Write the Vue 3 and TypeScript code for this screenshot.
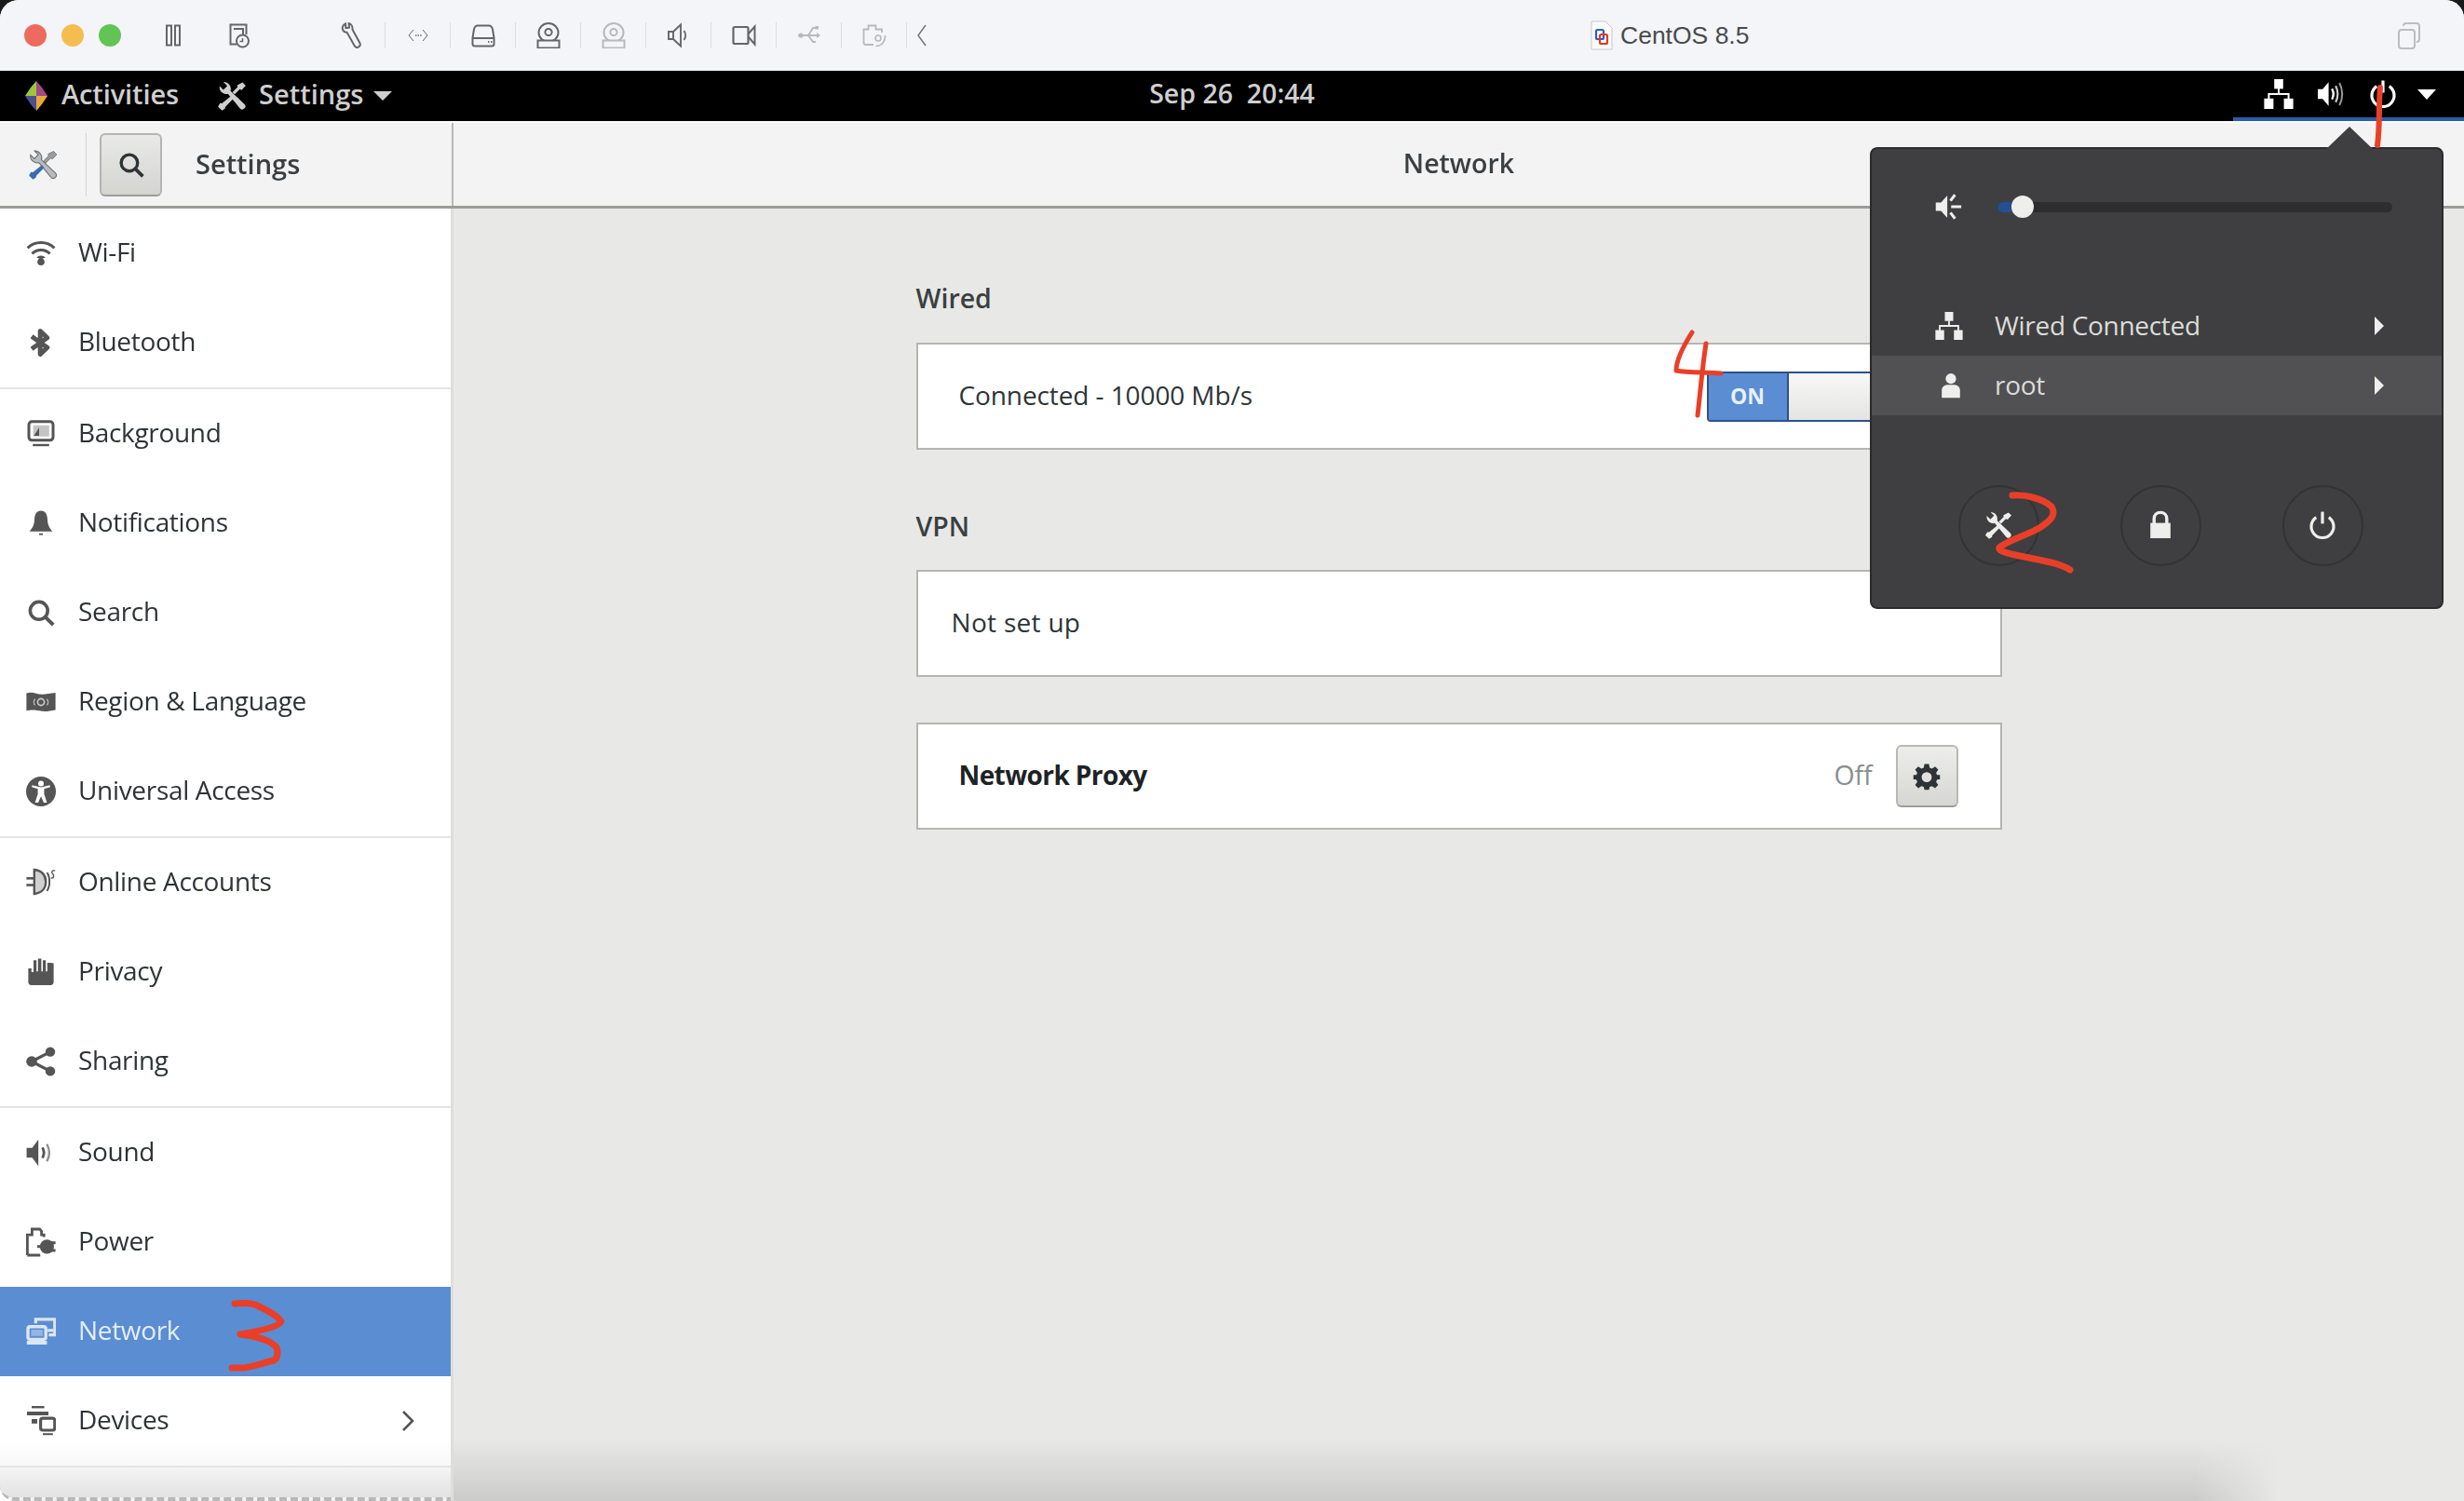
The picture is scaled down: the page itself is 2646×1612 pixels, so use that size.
<script setup lang="ts">
const icons: Record<string, string> = {
  wifi: '<g fill="none" stroke="currentColor" stroke-width="1.5"><path d="M.8 5.2A10.4 10.4 0 0 1 15.2 5.2"/><path d="M3.2 8.2A6.8 6.8 0 0 1 12.8 8.2"/></g><circle cx="8" cy="12.6" r="1.9"/><path d="M5.6 10.2A3.4 3.4 0 0 1 10.4 10.2L8 11.2Z"/>',
  bluetooth: '<path d="M3 4.6 11.4 10.6 7.6 14.2V1.8L11.4 5.4 3 11.4" fill="none" stroke="currentColor" stroke-width="2.5" stroke-linejoin="round"/>',
  background: '<rect x="1.5" y="1.4" width="13" height="10" rx="1.6" fill="none" stroke="currentColor" stroke-width="1.5"/><rect x="3.8" y="3.4" width="8.6" height="6" fill="currentColor" opacity=".35"/><path d="M4.2 9 7 4.6V9Z"/><rect x="3.6" y="13.4" width="8.8" height="1.2"/>',
  bell: '<path d="M8 1.2C5.6 1.2 4.6 3.2 4.5 6 4.4 9 3.4 10.6 1.8 12.4H14.2C12.6 10.6 11.6 9 11.5 6 11.4 3.2 10.4 1.2 8 1.2Z"/><rect x="7" y="13.4" width="2" height=".9"/>',
  search: '<circle cx="6.9" cy="6.9" r="4.7" fill="none" stroke="currentColor" stroke-width="1.8"/><path d="M10.2 10.2 14.6 14.6" stroke="currentColor" stroke-width="2"/>',
  region: '<path d="M.2 3.2C3.5 2.2 5.8 3.9 8.6 3.9 10.8 3.9 13 3.2 15.8 3V12.2C13 12.6 10.8 13.2 8.6 12.9 5.8 12.5 3.5 11.9.2 12.6Z"/><circle cx="8" cy="8" r="1.8" fill="none" stroke="#ccc" stroke-width=".8"/><path d="M4.8 6.4C4 7.4 4 8.8 4.8 9.6M11.2 6.4C12 7.4 12 8.8 11.2 9.6" fill="none" stroke="#bbb" stroke-width=".7"/>',
  access: '<circle cx="8" cy="8" r="8"/><circle cx="8" cy="3.8" r="1.5" fill="#fff"/><path d="M3 5.6 6.3 6.6V9.4L4.8 14H6.5L8 10.6 9.5 14H11.2L9.7 9.4V6.6L13 5.6 12.7 4.6 8 5.7 3.3 4.6Z" fill="#fff"/>',
  online: '<rect x=".2" y="5" width="4" height="1.3"/><rect x=".2" y="8.6" width="4" height="1.3"/><path d="M4.4 1C8.4 1.4 10.6 4 10.6 7.4 10.6 11 8.4 13.6 4.4 14Z" fill="currentColor" fill-opacity=".28" stroke="currentColor" stroke-width="1.2"/><path d="M11.2 2.6C13 5 13 10 11.2 12.4" fill="none" stroke="currentColor" stroke-width="1"/><path d="M15.6 1.6C14.2 1 13.3 2.2 14.2 3.2 15.2 4 15 5.8 13.4 5.4" fill="none" stroke="currentColor" stroke-width=".7"/>',
  privacy: '<path d="M1.2 6H2.9V8H4V1.6H5.6V7.6H6.4V.8H8.2V7.6H9V1.6H10.6V7.6H11.4V3H13.2L14.8 3.2V13.4C14.8 14.4 14.2 15 13.2 15H2.8C1.8 15 1.2 14.4 1.2 13.4Z"/>',
  share: '<path d="M3 8 13 2.8M3 8 13 13.2" stroke="currentColor" stroke-width="1.6"/><circle cx="3" cy="8" r="2.9"/><circle cx="13" cy="2.8" r="2.6"/><circle cx="13" cy="13.2" r="2.6"/>',
  sound: '<path d="M.3 5.4H3.3L6.6.9V15.1L3.3 10.6H.3Z"/><path d="M8.8 5.2C9.8 7 9.8 9 8.8 10.8" fill="none" stroke="currentColor" stroke-width="1.4"/><path d="M11.2 3.4C12.8 6.4 12.8 9.6 11.2 12.6" fill="none" stroke="currentColor" stroke-width="1.2" opacity=".65"/>',
  power: '<path d="M.7 15V4.1H3.2V1H7.3L8.3 2.1V4.1H9.6V5.2M7.6 15H.7" fill="none" stroke="currentColor" stroke-width="1.4"/><circle cx="11.2" cy="10.4" r="3.8"/><rect x="12.8" y="7.6" width="3" height="1.5"/><rect x="12.8" y="11.7" width="3" height="1.5"/><rect x="6" y="9.6" width="2.4" height="1.5"/>',
  network: '<rect x="1" y="5.4" width="9.6" height="6.8" rx="1.2" fill="none" stroke="currentColor" stroke-width="1.7"/><rect x="2.7" y="7" width="6.2" height="3.4" fill="currentColor" opacity=".45"/><rect x=".4" y="13" width="10.8" height="2"/><path d="M5.2 3.6V1.4H15.4V9.8H12.2" fill="none" stroke="currentColor" stroke-width="1.6"/><rect x="11.6" y="6.6" width="3.2" height="1.6"/>',
  devices: '<rect x="3" y="0" width="6.8" height="1.2"/><rect x="0.5" y="3" width="11.5" height="2"/><rect x="3" y="7" width="3" height="2.4"/><rect x="7.8" y="6.6" width="7.6" height="6.4" rx="1.2" fill="none" stroke="currentColor" stroke-width="1.6"/><rect x="9" y="14.6" width="5.4" height="1"/>',
  tools: '<path d="M3.8 1 5.7 2.9 3.7 4.9 1.8 3A3.4 3.4 0 0 0 6 6.9L12.1 14.3A1.5 1.5 0 0 0 14.4 12.2L7.3 5.5A3.5 3.5 0 0 0 3.8 1Z"/><path d="M13.4 1.2 15 2.8 12.9 5 12 4.6 9.4 7.2 8.3 6.1 10.9 3.5 10.7 2.6ZM7.5 8.1 8.7 9.4 4.6 13.6 4.6 14.4 3 15.4 1 13.4 2 11.7 3 11.8Z"/>',
  sitemap: '<rect x="5.6" y="0" width="4.8" height="5.2"/><rect x=".2" y="10.4" width="5" height="5.6"/><rect x="10.8" y="10.4" width="5" height="5.6"/><path d="M8 5V8H2.7V10.6M8 8H13.3V10.6" fill="none" stroke="currentColor" stroke-width="1"/>',
  speakerOn: '<path d="M1 5.4H3.6L6.8 1.6V14.4L3.6 10.6H1Z"/><path d="M8.6 5.2C9.6 7 9.6 9 8.6 10.8" fill="none" stroke="currentColor" stroke-width="1.2"/><path d="M10.6 3.6C12 6.4 12 9.6 10.6 12.4" fill="none" stroke="currentColor" stroke-width="1.1" opacity=".8"/><path d="M12.6 2C14.6 5.6 14.6 10.4 12.6 14" fill="none" stroke="currentColor" stroke-width="1" opacity=".6"/>',
  muted: '<path d="M.4 5.6H3.4L7 1.6V14.4L3.4 10.4H.4Z"/><path d="M9.2 8H15M8.8 4.6 11.4 1.2M8.8 11.4 11.4 14.8" stroke="currentColor" stroke-width="1.6"/>',
  powerSym: '<path d="M4.6 3.8A6 6 0 1 0 11.4 3.8" fill="none" stroke="currentColor" stroke-width="1.6"/><path d="M8 .8V7.2" stroke="currentColor" stroke-width="1.6"/>',
  user: '<circle cx="8" cy="3.8" r="3.2"/><path d="M2.4 15.5V11C2.4 9 4 7.8 5.8 7.6H10.2C12 7.8 13.6 9 13.6 11V15.5Z"/>',
  lock: '<path d="M4.6 7V4.6C4.6 2.6 6 1.2 8 1.2S11.4 2.6 11.4 4.6V7" fill="none" stroke="currentColor" stroke-width="1.7"/><rect x="2.6" y="6.8" width="10.8" height="8.2"/>',
  gear: '<path fill-rule="evenodd" d="M6.7.8H9.3L9.7 2.9 11 3.4 12.8 2.2 14.6 4 13.4 5.8 13.9 7.1 15.6 7V9.6L13.9 9.7 13.4 11 14.6 12.8 12.8 14.6 11 13.4 9.7 13.9 9.3 15.6H6.7L6.3 13.9 5 13.4 3.2 14.6 1.4 12.8 2.6 11 2.1 9.7.4 9.6V7L2.1 7.1 2.6 5.8 1.4 4 3.2 2.2 5 3.4 6.3 2.9ZM8 5.4A2.9 2.9 0 1 0 8 11.2 2.9 2.9 0 0 0 8 5.4Z"/>',
};

const toolIcons: Record<string, string> = {
  wrench: '<path d="M6 1.5C3 2.6 2 6 3.4 8.6 4.4 10.2 6 11 7.6 10.8L15.6 25C16.6 26.8 18.6 27.4 20.2 26.4 21.8 25.4 22.2 23.6 21.2 21.8L13.4 7.6C14 4.8 12.4 2 9.6 1L10 5.6 6.4 6.2Z" fill="none" stroke="currentColor" stroke-width="2"/>',
  code: '<path d="M9 8 4 14 9 20M19 8 24 14 19 20" fill="none" stroke="currentColor" stroke-width="1"/><path d="M11 14H12.4M13.6 14H15M16.2 14H17.6" stroke="currentColor" stroke-width="1.6"/>',
  hdd: '<path d="M8 3.5H20C22 3.5 23.4 5 24 7.5L25.5 16.5V23C25.5 24.4 24.4 25.5 23 25.5H5C3.6 25.5 2.5 24.4 2.5 23V16.5L4 7.5C4.6 5 6 3.5 8 3.5Z M2.6 17H25.4" fill="none" stroke="currentColor" stroke-width="2"/><path d="M19 21H20.4M22 21H23.4" stroke="currentColor" stroke-width="1.8"/>',
  cd: '<ellipse cx="14" cy="11" rx="10.5" ry="10" fill="none" stroke="currentColor" stroke-width="2"/><circle cx="14" cy="10.5" r="3.6" fill="none" stroke="currentColor" stroke-width="2"/><path d="M2.5 19.5H25.5V27.5H2.5Z" fill="#f3f5f9" stroke="currentColor" stroke-width="2"/>',
  speaker: '<path d="M3 10H8L16 2.5V25.5L8 18H3ZM8 10V18" fill="none" stroke="currentColor" stroke-width="1.9"/><path d="M19.5 9C21.5 12 21.5 16 19.5 19" fill="none" stroke="currentColor" stroke-width="1.8"/>',
  camera: '<rect x="2.5" y="5" width="16" height="18" rx="1.5" fill="none" stroke="currentColor" stroke-width="2.2"/><path d="M18.5 12.5 25.5 4.5V23.5L18.5 15.5" fill="none" stroke="currentColor" stroke-width="2"/>',
  usb: '<path d="M2 14H24M13 14 18 6H22M13 14 18 21H21" fill="none" stroke="currentColor" stroke-width="1.9"/><circle cx="5" cy="14" r="2.6"/><path d="M22 11 26 14 22 17Z"/><rect x="20.5" y="4" width="3.5" height="3.5"/>',
  folder: '<path d="M13 24H4.5C3.4 24 2.5 23.1 2.5 22V7.5H7.5V3.5H15.5V7.5H22V11" fill="none" stroke="currentColor" stroke-width="1.8"/><circle cx="18" cy="17" r="3" fill="none" stroke="currentColor" stroke-width="1.6"/><path d="M25.5 14C26 20 22 25.5 15.5 25.5" fill="none" stroke="currentColor" stroke-width="1.6"/>',
};

type Row = { id: string; label: string; icon: string; active?: boolean; chevron?: boolean };
const groups: Row[][] = [
  [
    { id: 'wifi', label: 'Wi-Fi', icon: 'wifi' },
    { id: 'bt', label: 'Bluetooth', icon: 'bluetooth' },
  ],
  [
    { id: 'bg', label: 'Background', icon: 'background' },
    { id: 'notif', label: 'Notifications', icon: 'bell' },
    { id: 'search', label: 'Search', icon: 'search' },
    { id: 'region', label: 'Region & Language', icon: 'region' },
    { id: 'ua', label: 'Universal Access', icon: 'access' },
  ],
  [
    { id: 'online', label: 'Online Accounts', icon: 'online' },
    { id: 'privacy', label: 'Privacy', icon: 'privacy' },
    { id: 'sharing', label: 'Sharing', icon: 'share' },
  ],
  [
    { id: 'sound', label: 'Sound', icon: 'sound' },
    { id: 'power', label: 'Power', icon: 'power' },
    { id: 'network', label: 'Network', icon: 'network', active: true },
    { id: 'devices', label: 'Devices', icon: 'devices', chevron: true },
  ],
];

const toolbar = [
  { id: 'wrench', icon: 'wrench', dim: false },
  { id: 'code', icon: 'code', dim: false },
  { id: 'hdd', icon: 'hdd', dim: false },
  { id: 'cd', icon: 'cd', dim: false },
  { id: 'cd2', icon: 'cd', dim: true },
  { id: 'speaker', icon: 'speaker', dim: false },
  { id: 'camera', icon: 'camera', dim: false },
  { id: 'usb', icon: 'usb', dim: true },
  { id: 'folder', icon: 'folder', dim: true },
];
</script>

<template>
  <div class="screen">
    <header class="titlebar">
      <div class="lights">
        <span class="light red"></span>
        <span class="light yellow"></span>
        <span class="light green"></span>
      </div>
      <div class="tb-plain">
        <svg class="tb-ico" viewBox="0 0 28 28"><path d="M7 3.5H12V24.5H7ZM16 3.5H21V24.5H16Z" fill="none" stroke="currentColor" stroke-width="2" /></svg>
      </div>
      <div class="tb-plain">
        <svg class="tb-ico" viewBox="0 0 28 28"><path d="M12 23.5H5.5V2.5H22.5V13M9 7H19V13" fill="none" stroke="currentColor" stroke-width="2" /><circle cx="18.5" cy="20" r="6.5" fill="none" stroke="currentColor" stroke-width="2" /><path d="M18.5 17V20.5H15.5" fill="none" stroke="currentColor" stroke-width="1.5" /></svg>
      </div>
      <div class="tb-group">
        <div v-for="t in toolbar" :key="t.id" class="tb-btn" :class="{ dim: t.dim }">
          <svg class="tb-ico" viewBox="0 0 28 28" v-html="toolIcons[t.icon]"></svg>
        </div>
        <svg class="tb-chev" viewBox="0 0 14 28"><path d="M11 3 3 14 11 25" fill="none" stroke="currentColor" stroke-width="1.5" /></svg>
      </div>
      <div class="vm-title">
        <svg class="vm-doc" viewBox="0 0 24 32">
          <path d="M1 1H16L23 8V31H1Z" fill="#fbfbfb" stroke="#c8c8c8" />
          <rect x="6" y="10" width="8" height="10" rx="1.5" fill="none" stroke="#2a62b8" stroke-width="2.2" />
          <rect x="10" y="15" width="8" height="10" rx="1.5" fill="none" stroke="#e2392a" stroke-width="2.2" />
        </svg>
        <span>CentOS 8.5</span>
      </div>
      <svg class="tb-copy" viewBox="0 0 26 30"><rect x="2" y="9" width="17" height="20" rx="3" fill="none" stroke="currentColor" stroke-width="2" /><path d="M7 5C7 3 8 2 10 2H21C23 2 24 3 24 5V19C24 21 23 22 21 22" fill="none" stroke="currentColor" stroke-width="2" /></svg>
    </header>

    <div class="topbar">
      <div class="tp-left">
        <svg class="logo" viewBox="0 0 28 34">
          <path d="M14 1 14 17 2 17 8 8Z" fill="#9dc63a" />
          <path d="M14 1 14 17 26 17 20 8Z" fill="#a5478c" />
          <path d="M14 33 14 17 2 17 8 26Z" fill="#4a4f92" />
          <path d="M14 33 14 17 26 17 20 26Z" fill="#e8a93a" />
        </svg>
        <span class="activities">Activities</span>
        <svg class="tp-tools" viewBox="0 0 16 16" v-html="icons.tools"></svg>
        <span class="app">Settings</span>
        <span class="caret"></span>
      </div>
      <div class="clock">Sep 26&nbsp;&nbsp;20:44</div>
      <div class="tp-right">
        <div class="tray">
          <svg class="tray-ico" viewBox="0 0 16 16" v-html="icons.sitemap"></svg>
          <svg class="tray-ico" viewBox="0 0 16 16" v-html="icons.speakerOn"></svg>
          <svg class="tray-ico" viewBox="0 0 16 16" v-html="icons.powerSym"></svg>
          <span class="caret white"></span>
        </div>
      </div>
    </div>

    <div class="window">
      <div class="headerbar">
        <div class="hb-left">
          <svg class="hb-tools" viewBox="0 0 16 16">
            <path d="M3.8 1 5.7 2.9 3.7 4.9 1.8 3A3.4 3.4 0 0 0 6 6.9L12.1 14.3A1.5 1.5 0 0 0 14.4 12.2L7.3 5.5A3.5 3.5 0 0 0 3.8 1Z" fill="#b9bbbe" stroke="#6d6f72" stroke-width=".5" />
            <path d="M13.4 1.2 15 2.8 12.9 5 12 4.6 9.4 7.2 8.3 6.1 10.9 3.5 10.7 2.6Z" fill="#9a9c9f" stroke="#6d6f72" stroke-width=".4" />
            <path d="M7.5 8.1 8.7 9.4 4.6 13.6 4.6 14.4 3 15.4 1 13.4 2 11.7 3 11.8Z" fill="#3a6cb0" />
          </svg>
          <span class="hb-sep"></span>
          <button class="search-btn" type="button">
            <svg class="search-ico" viewBox="0 0 16 16" v-html="icons.search"></svg>
          </button>
          <span class="hb-title">Settings</span>
        </div>
        <div class="hb-main">Network</div>
      </div>

      <div class="body">
        <nav class="sidebar">
          <div class="nav-list">
            <template v-for="(group, gi) in groups" :key="gi">
              <div v-for="row in group" :key="row.id" class="nav-row" :class="{ active: row.active }">
                <svg class="nav-ico" viewBox="0 0 16 16" v-html="icons[row.icon]"></svg>
                <span class="nav-label">{{ row.label }}</span>
                <svg v-if="row.chevron" class="nav-chev" viewBox="0 0 14 24"><path d="M2 2 12 12 2 22" fill="none" stroke="currentColor" stroke-width="2.6" /></svg>
              </div>
              <div class="nav-div"></div>
            </template>
          </div>
          <div class="nav-foot"></div>
        </nav>

        <main class="content">
          <div class="panel">
            <h2 class="heading">Wired</h2>
            <section class="frame">
              <span class="frame-text">Connected - 10000 Mb/s</span>
              <div class="toggle">
                <span class="toggle-on">ON</span>
                <span class="toggle-knob"></span>
              </div>
            </section>
            <h2 class="heading vpn">VPN</h2>
            <section class="frame">
              <span class="frame-text indent">Not set up</span>
            </section>
            <section class="frame proxy">
              <span class="frame-text strong">Network Proxy</span>
              <span class="off">Off</span>
              <button class="gear-btn" type="button">
                <svg class="gear-ico" viewBox="0 0 16 16" v-html="icons.gear"></svg>
              </button>
            </section>
          </div>
          <div class="shade"></div>
        </main>
      </div>
    </div>

    <aside class="popover">
      <span class="pop-arrow"></span>
      <div class="pop-slider">
        <svg class="pop-ico" viewBox="0 0 16 16" v-html="icons.muted"></svg>
        <div class="track">
          <span class="track-fill"></span>
          <span class="track-knob"></span>
        </div>
      </div>
      <div class="pop-row first">
        <svg class="pop-ico" viewBox="0 0 16 16" v-html="icons.sitemap"></svg>
        <span class="pop-label">Wired Connected</span>
        <span class="pop-tri"></span>
      </div>
      <div class="pop-row hover">
        <svg class="pop-ico small" viewBox="0 0 16 16" v-html="icons.user"></svg>
        <span class="pop-label">root</span>
        <span class="pop-tri"></span>
      </div>
      <div class="pop-actions">
        <button class="round" type="button"><svg class="round-ico" viewBox="0 0 16 16" v-html="icons.tools"></svg></button>
        <button class="round" type="button"><svg class="round-ico" viewBox="0 0 16 16" v-html="icons.lock"></svg></button>
        <button class="round" type="button"><svg class="round-ico" viewBox="0 0 16 16" v-html="icons.powerSym"></svg></button>
      </div>
    </aside>

    <svg class="ink" viewBox="0 0 2646 1612" stroke="#e93f28" stroke-linecap="round" stroke-linejoin="round">
      <path stroke-width="6" d="M2556 94C2554 115 2556 135 2553 156" />
      <path stroke-width="7" d="M2161 532C2175 531 2193 535 2203 544 2208 552 2204 558 2190 567 2176 575 2155 581 2147 588 2145 592 2158 595 2174 598 2192 602 2210 604 2223 612" />
      <path stroke-width="7" d="M252 1400C262 1399 272 1399 278 1403 288 1408 297 1412 302 1419 300 1425 280 1429 258 1433 275 1435 290 1439 297 1447 299 1453 298 1459 294 1461 282 1464 270 1468 262 1469L249 1469" />
      <path stroke-width="5" d="M1817 357C1810 368 1800 385 1800 398 1815 401 1835 399 1848 401M1832 369C1828 395 1826 420 1823 446" />
    </svg>
  </div>
</template>

<style>
html, body { margin: 0; background: #1a1a1a; }
</style>

<style scoped>
svg { fill: currentColor; }
.screen {
  position: relative;
  width: 2646px;
  height: 1612px;
  overflow: hidden;
  display: flex;
  flex-direction: column;
  font-family: "Open Sans", "Noto Sans", sans-serif;
  background: #fff;
  border-radius: 20px 20px 0 0;
  filter: blur(0.45px);
}
.titlebar {
  height: 76px;
  flex: none;
  display: flex;
  align-items: center;
  background: #f3f5f9;
  color: #66666a;
}
.lights { display: flex; gap: 16px; padding-left: 26px; width: 125px; flex: none; }
.light { width: 24px; height: 24px; border-radius: 50%; }
.red { background: #ee6a5f; }
.yellow { background: #f5bd4f; }
.green { background: #61c454; }
.tb-plain { width: 70px; flex: none; display: flex; justify-content: center; }
.tb-ico { width: 28px; height: 28px; }
.tb-group { display: flex; align-items: center; margin-left: 53px; }
.tb-btn {
  width: 70px;
  height: 28px;
  display: flex;
  justify-content: center;
  align-items: center;
  border-right: 1px solid #dcdde1;
  box-sizing: border-box;
}
.tb-btn.dim { color: #b9b9bc; }
.tb-chev { width: 14px; height: 28px; margin-left: 9px; color: #77777a; }
.vm-title {
  display: flex;
  align-items: center;
  gap: 8px;
  margin-left: 711px;
  font-family: "Liberation Sans", sans-serif;
  font-size: 26.5px;
  color: #4a4a4c;
}
.vm-doc { width: 24px; height: 32px; }
.tb-copy { width: 26px; height: 30px; margin-left: auto; margin-right: 46px; color: #bdbdc0; }

.topbar {
  height: 54px;
  flex: none;
  background: #000;
  display: grid;
  grid-template-columns: 1fr auto 1fr;
  align-items: center;
  color: #cfcfcf;
  font-size: 29px;
  font-weight: 600;
}
.tp-left { display: flex; align-items: center; padding-left: 25px; }
.activities, .app, .clock { position: relative; top: -3px; }
.logo { width: 28px; height: 34px; }
.activities { margin-left: 13px; letter-spacing: -0.1px; }
.tp-tools { width: 34px; height: 34px; margin-left: 40px; }
.app { margin-left: 12px; }
.caret {
  width: 0;
  height: 0;
  margin-left: 11px;
  border-left: 10px solid transparent;
  border-right: 10px solid transparent;
  border-top: 10px solid currentColor;
}
.clock { font-size: 28.5px; }
.tp-right { display: flex; justify-content: flex-end; height: 100%; }
.tray {
  width: 248px;
  box-sizing: border-box;
  height: 54px;
  display: flex;
  align-items: center;
  padding-left: 33px;
  gap: 24px;
  border-bottom: 4px solid #2a5fa8;
  color: #fff;
}
.tray-ico { width: 32px; height: 32px; }
.caret.white { margin-left: -3px; border-left-width: 10px; border-right-width: 10px; border-top-width: 11px; }

.window { flex: 1; display: flex; flex-direction: column; min-height: 0; }
.headerbar {
  height: 94px;
  flex: none;
  box-sizing: border-box;
  display: flex;
  background: #f3f3f3;
  border-top: 2px solid #fbfbfb;
  border-bottom: 3px solid #9b9b98;
}
.hb-left {
  width: 487px;
  flex: none;
  box-sizing: border-box;
  display: flex;
  align-items: center;
  border-right: 2px solid #b8b8b6;
}
.hb-tools { width: 34px; height: 34px; margin-left: 29px; }
.hb-sep { width: 1px; height: 68px; background: #d4d4d2; margin-left: 29px; }
.search-btn {
  width: 67px;
  height: 68px;
  padding: 0;
  margin-left: 14px;
  box-sizing: border-box;
  border: 2px solid #b4b4b0;
  border-bottom-color: #9c9c98;
  border-radius: 6px;
  background: linear-gradient(#e9e9e7, #d4d4d1);
  color: #2e3436;
  display: flex;
  align-items: center;
  justify-content: center;
}
.search-ico { width: 30px; height: 30px; }
.hb-title { margin-left: 36px; padding-bottom: 3px; font-size: 29px; font-weight: 600; color: #3a3f41; }
.hb-main {
  flex: 1;
  display: flex;
  align-items: center;
  justify-content: center;
  padding-bottom: 3px;
  font-size: 28.5px;
  font-weight: 600;
  color: #3a3f41;
}

.body { flex: 1; display: flex; min-height: 0; }
.sidebar {
  width: 487px;
  flex: none;
  box-sizing: border-box;
  display: flex;
  flex-direction: column;
  background: #fff;
  border-right: 3px solid #dededc;
}
.nav-row {
  height: 96px;
  flex: none;
  box-sizing: border-box;
  display: flex;
  align-items: center;
  padding: 0 39px 0 28px;
  font-size: 28px;
  letter-spacing: -0.32px;
  color: #2e3436;
}
.nav-row.active { background: #5b8dd2; color: #e4edf8; }
.nav-ico { width: 32px; height: 32px; color: #555; flex: none; }
.active .nav-ico { color: #dbe6f5; }
.nav-label { margin-left: 24px; padding-bottom: 4px; }
.nav-chev { width: 14px; height: 24px; margin-left: auto; color: #555; }
.nav-div { height: 2px; background: #e4e4e4; flex: none; }
.nav-list { flex: none; background: linear-gradient(#fff 1320px, #f8f8f8 1352px); }
.nav-row:not(.active) { background: transparent; }
.nav-foot {
  flex: 1;
  background: linear-gradient(#f4f4f4, #e2e2e2);
  border-bottom: 4px dashed #b8b8b8;
  box-sizing: border-box;
  border-bottom-left-radius: 16px;
}

.content { flex: 1; position: relative; background: #e8e8e6; min-width: 0; }
.panel { width: 1166px; margin: 0 auto; padding-top: 76px; }
.heading {
  margin: 0 0 28px;
  height: 40px;
  line-height: 40px;
  font-size: 28.5px;
  font-weight: 600;
  color: #3a3f41;
}
.heading.vpn { margin-top: 62px; margin-bottom: 27px; }
.frame {
  height: 115px;
  box-sizing: border-box;
  display: flex;
  align-items: center;
  padding: 0 45px;
  background: #fff;
  border: 2px solid #b5b5b3;
  font-size: 28px;
  letter-spacing: -0.1px;
  color: #2e3436;
}
.frame-text { padding-bottom: 3px; margin-left: -1px; }
.frame-text.indent { margin-left: -9px; letter-spacing: 0.3px; }
.frame-text.strong { font-weight: 700; color: #1e2224; letter-spacing: -0.6px; }
.frame.proxy { margin-top: 49px; }
.toggle {
  margin-left: auto;
  width: 270px;
  height: 54px;
  display: flex;
  box-sizing: border-box;
  border: 2px solid #2a5288;
  border-radius: 4px;
  background: #ececec;
}
.toggle-on {
  width: 86px;
  background: #5b8dd2;
  color: #e8f0fa;
  font-size: 23px;
  font-weight: 700;
  display: flex;
  align-items: center;
  justify-content: center;
  padding-bottom: 2px;
  box-sizing: border-box;
  border-right: 2px solid #2a5288;
}
.toggle-knob { flex: 1; background: linear-gradient(#f8f8f8, #e4e4e2); }
.off { margin-left: auto; color: #8a8e8f; font-size: 28.5px; padding-bottom: 3px; }
.gear-btn {
  width: 67px;
  height: 67px;
  margin-left: 25px;
  padding: 0;
  box-sizing: border-box;
  border: 2px solid #b8b8b4;
  border-bottom-color: #9c9c98;
  border-radius: 6px;
  background: linear-gradient(#ededeb, #d6d6d3);
  color: #2e3436;
  display: flex;
  align-items: center;
  justify-content: center;
}
.gear-ico { width: 30px; height: 30px; }
.shade {
  position: absolute;
  left: 0;
  right: 0;
  bottom: 0;
  height: 66px;
  background: linear-gradient(rgba(0, 0, 0, 0), rgba(0, 0, 0, .12));
  -webkit-mask-image: linear-gradient(to right, #000 1870px, transparent 1960px);
  mask-image: linear-gradient(to right, #000 1870px, transparent 1960px);
}

.popover {
  position: absolute;
  left: 2008px;
  top: 158px;
  width: 616px;
  height: 496px;
  box-sizing: border-box;
  background: #3f3f41;
  border: 2px solid #2b2b2d;
  border-radius: 8px;
  color: #eeeeec;
  display: flex;
  flex-direction: column;
  font-size: 28px;
  letter-spacing: -0.3px;
}
.pop-arrow {
  position: absolute;
  left: 488px;
  top: -24px;
  width: 0;
  height: 0;
  border-left: 25px solid transparent;
  border-right: 25px solid transparent;
  border-bottom: 24px solid #3f3f41;
}
.pop-slider {
  height: 124px;
  flex: none;
  display: flex;
  align-items: center;
  padding: 0 0 0 68px;
}
.pop-ico { width: 30px; height: 30px; flex: none; }
.pop-ico.small { width: 28px; height: 28px; margin-left: 3px; margin-right: -1px; }
.track {
  position: relative;
  margin-left: 37px;
  width: 424px;
  height: 11px;
  background: #2d2d2f;
  border-radius: 6px;
}
.track-fill {
  position: absolute;
  left: 0;
  top: 0;
  bottom: 0;
  width: 26px;
  background: #24508f;
  border-radius: 6px 0 0 6px;
}
.track-knob {
  position: absolute;
  left: 15px;
  top: -7px;
  width: 24px;
  height: 24px;
  border-radius: 50%;
  background: #eeeeec;
}
.pop-row {
  height: 64px;
  flex: none;
  display: flex;
  align-items: center;
  padding: 0 62px 0 68px;
  font-weight: 400;
}
.pop-row.first { margin-top: 34px; }
.pop-row.hover { background: #515153; }
.pop-label { margin-left: 34px; padding-bottom: 3px; color: #dcdcda; }
.pop-tri {
  margin-left: auto;
  width: 0;
  height: 0;
  border-top: 10px solid transparent;
  border-bottom: 10px solid transparent;
  border-left: 10px solid #eeeeec;
}
.pop-actions {
  flex: 1;
  display: flex;
  justify-content: center;
  gap: 87px;
  align-items: center;
  padding: 30px 0 0 8px;
}
.round {
  width: 87px;
  height: 87px;
  padding: 0;
  border-radius: 50%;
  border: 2px solid #333335;
  background: #3f3f41;
  color: #eeeeec;
  display: flex;
  align-items: center;
  justify-content: center;
}
.round-ico { width: 32px; height: 32px; }

.ink { position: absolute; left: 0; top: 0; width: 2646px; height: 1612px; pointer-events: none; fill: none; }
</style>
